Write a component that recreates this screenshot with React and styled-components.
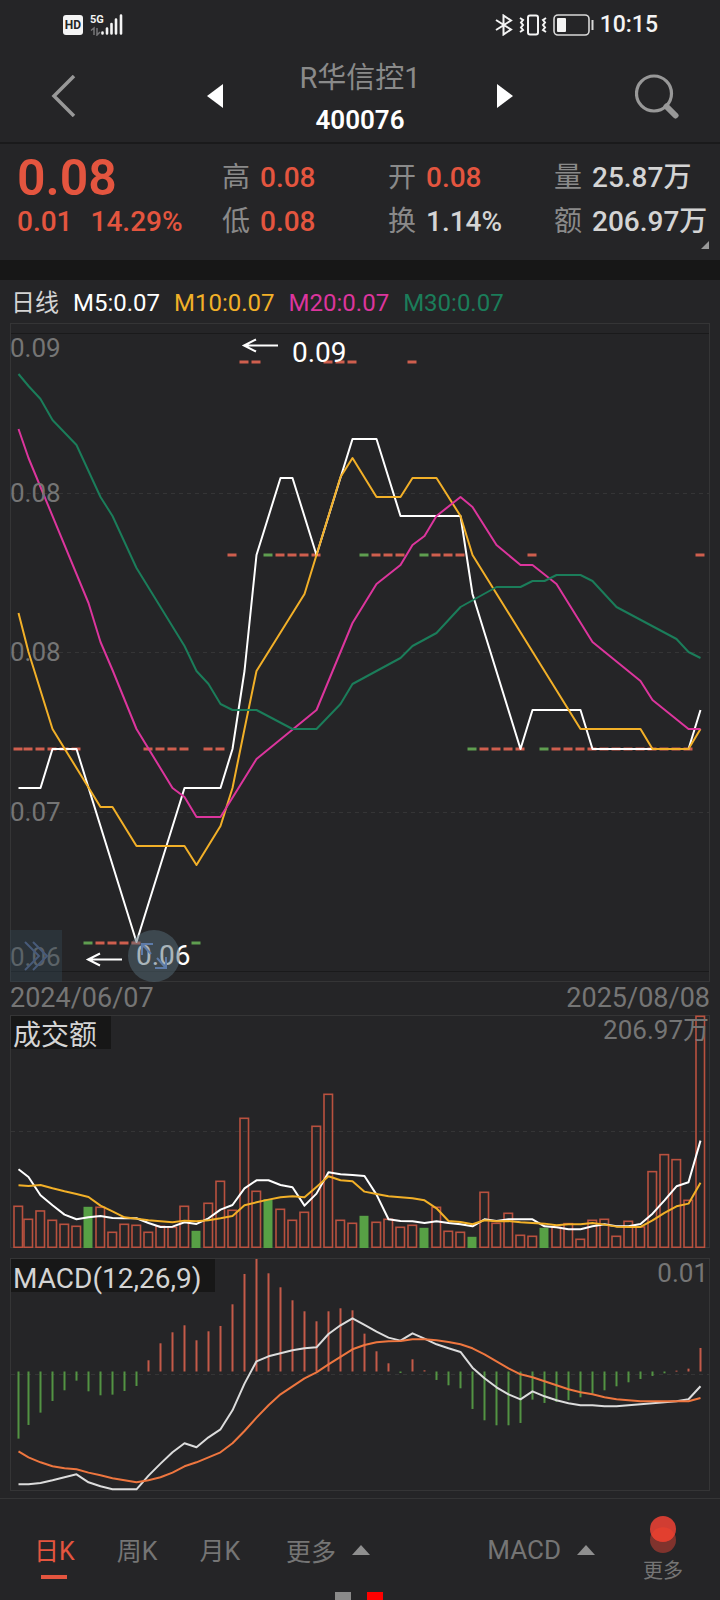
import React from "react";
import styled, { createGlobalStyle } from "styled-components";

const color = {
  bg: "#252527",
  dark: "#171717",
  border: "#353536",
  rise: "#e4553f",
  riseSoft: "#cf5f4e",
  fall: "#57a045",
  fallSoft: "#5f9e50",
  muted: "#8a8a8a",
  axis: "#757575",
  text: "#d4d4d4",
  ma5: "#ffffff",
  ma10: "#f2b028",
  ma20: "#dc359d",
  ma30: "#1b7d5a",
  dea: "#ee763f",
};

const FONT = `Roboto, "Noto Sans CJK SC", sans-serif`;

const GlobalStyle = createGlobalStyle`
  * { box-sizing: border-box; }
  body { margin: 0; background: ${color.bg}; color: ${color.text}; font-family: ${FONT}; }
  button { border: 0; padding: 0; margin: 0; background: none; color: inherit; font: inherit; cursor: pointer; }
  svg { display: block; }
`;

const Page = styled.div`
  min-height: 100vh;
  display: flex;
  flex-direction: column;
`;

const StatusBar = styled.div`
  height: 48px;
  padding: 2px 62px 0 63px;
  display: flex;
  align-items: center;
  justify-content: space-between;
  color: #f4f4f4;
`;

const StatusGroup = styled.div`
  display: flex;
  align-items: center;
  gap: ${(p) => p.$gap}px;
`;

const Clock = styled.time`
  font-size: 23px;
  font-weight: 500;
  line-height: 28px;
`;

const Header = styled.header`
  height: 96px;
  padding: 2px 41px 0;
  border-bottom: 2px solid #1a1a1b;
  display: grid;
  grid-template-columns: 1fr auto 1fr;
  align-items: center;
`;

const IconButton = styled.button`
  display: block;
  justify-self: ${(p) => p.$align || "center"};
`;

const StockNav = styled.div`
  display: flex;
  align-items: center;
  justify-content: space-between;
  width: 306px;
`;

const HeaderSide = styled.div`
  display: grid;
  padding-left: 10px;
`;

const StockTitle = styled.h1`
  margin: 0;
  padding-top: 4px;
  text-align: center;
  font-size: 29px;
  font-weight: 400;
  line-height: 44px;
  color: ${color.muted};
`;

const StockCode = styled.div`
  color: #fff;
  font-size: 26px;
  font-weight: 600;
  line-height: 40px;
  text-align: center;
`;

const Quote = styled.section`
  position: relative;
  height: 116px;
  padding: 12px 0 0 17px;
  display: grid;
  grid-template-columns: 205fr 166fr 166fr 166fr;
  align-items: start;
`;

const QuoteColumn = styled.div`
  display: flex;
  flex-direction: column;
  white-space: nowrap;
`;

const LastPrice = styled.div`
  font-size: 50px;
  font-weight: 600;
  line-height: 44px;
  color: ${color.rise};
`;

const Change = styled.div`
  display: flex;
  gap: 18px;
  font-size: 28px;
  font-weight: 500;
  line-height: 44px;
  color: ${color.rise};
`;

const Stat = styled.div`
  display: flex;
  gap: 10px;
  font-size: 28px;
  line-height: 44px;
`;

const StatName = styled.span`
  color: ${color.muted};
`;

const StatValue = styled.span`
  color: ${(p) => (p.$up ? color.rise : color.text)};
  font-weight: 500;
`;

const Expand = styled.button`
  position: absolute;
  right: 11px;
  bottom: 11px;
`;

const Divider = styled.div`
  height: 20px;
  background: ${color.dark};
`;

const Legend = styled.div`
  height: 43px;
  padding: 2px 11px 0;
  display: flex;
  align-items: center;
  gap: 14px;
  font-size: 24px;
  line-height: 40px;
  white-space: nowrap;
`;

const LegendItem = styled.span`
  color: ${(p) => p.$color};
`;

const Charts = styled.main`
  padding: 0 10px;
  flex: 1;
`;

const Panel = styled.section`
  position: relative;
  margin-bottom: ${(p) => p.$gap || 0}px;
`;

const Plot = styled.svg`
  width: 100%;
  height: auto;
  font-family: ${FONT};
`;

const PanelTitle = styled.h2`
  position: absolute;
  top: 1px;
  left: 1px;
  margin: 0;
  padding: 0 14px 0 2px;
  height: 33px;
  line-height: 40px;
  font-size: 28px;
  font-weight: 400;
  color: ${color.text};
  background: ${color.dark};
`;

const Dates = styled.div`
  height: 33px;
  display: flex;
  justify-content: space-between;
  font-size: 27px;
  line-height: 32px;
  color: ${color.axis};
`;

const PanButton = styled.button`
  position: absolute;
  left: 0;
  bottom: 0;
  width: 52px;
  height: 52px;
  display: grid;
  place-items: center;
  background: rgba(52, 72, 84, 0.4);
`;

const ZoomButton = styled(PanButton)`
  left: 118px;
  border-radius: 50%;
  background: rgba(86, 108, 120, 0.5);
`;

const Footer = styled.footer`
  height: 102px;
  border-top: 1px solid ${color.border};
  padding: 0 37px 0 34px;
  display: grid;
  grid-template-rows: 93px 8px;
`;

const FooterRow = styled.nav`
  display: flex;
  align-items: stretch;
  color: ${color.axis};
  font-size: 25px;
`;

const Tab = styled.button`
  position: relative;
  margin-right: 42px;
  padding-top: 6px;
  white-space: nowrap;
  color: ${(p) => (p.$active ? color.rise : color.axis)};
  &::after {
    content: "";
    display: ${(p) => (p.$active ? "block" : "none")};
    position: absolute;
    left: 7px;
    bottom: 13px;
    width: 26px;
    height: 4px;
    background: ${color.rise};
  }
`;

const MenuButton = styled.button`
  display: flex;
  align-items: center;
  gap: 16px;
  padding-top: 8px;
  margin-left: ${(p) => (p.$end ? "auto" : "4px")};
  font-size: ${(p) => (p.$end ? 26 : 25)}px;
  white-space: nowrap;
`;

const MoreButton = styled.button`
  margin-left: 48px;
  padding-top: 17px;
  display: flex;
  flex-direction: column;
  align-items: center;
  font-size: 20px;
  line-height: 34px;
`;

const Pager = styled.div`
  display: flex;
  justify-content: center;
  gap: 16px;
`;

const PagerMark = styled.span`
  width: 16px;
  height: 8px;
  background: ${(p) => (p.$active ? "#ff0000" : "#8a8a8a")};
`;

/* ---------- data ---------- */

const COUNT = 58;
const FALLING = new Set([6, 15, 21, 29, 34, 38, 44]);
const xAt = (i) => (i === 0 ? 18.5 : 16.5 + 12 * i);

const closeRows = [
  [362, [[19, 20], [26, 28], [33, 33]]],
  [555, [[18, 18], [21, 25], [29, 32], [34, 37], [43, 43], [57, 57]]],
  [749, [[0, 5], [11, 14], [16, 17], [38, 42], [44, 56]]],
  [943, [[6, 10], [15, 15]]],
];

/* Moving averages as [sample index, y] at every turn of the line. */
const averages = [
  [color.ma5, [[0, 788], [2, 788], [3, 749], [5, 749], [10, 942], [14, 788], [17, 788], [18, 749], [19, 671], [20, 555], [22, 478], [23, 478], [25, 555], [28, 439], [30, 439], [32, 516], [37, 516], [38, 594], [42, 749], [43, 710], [47, 710], [48, 749], [56, 749], [57, 710]]],
  [color.ma10, [[0, 613], [1, 652], [3, 729], [7, 807], [8, 807], [10, 846], [14, 846], [15, 865], [17, 826], [18, 788], [19, 729], [20, 671], [24, 594], [25, 555], [27, 477], [28, 458], [30, 497], [32, 497], [33, 478], [35, 478], [37, 516], [38, 555], [47, 729], [52, 729], [53, 749], [56, 749], [57, 729]]],
  [color.ma20, [[0, 429], [1, 458], [6, 603], [7, 642], [8, 670], [10, 729], [13, 788], [14, 797], [15, 817], [17, 817], [20, 759], [25, 710], [28, 623], [30, 584], [32, 565], [33, 545], [34, 536], [35, 516], [37, 497], [38, 507], [40, 545], [42, 565], [43, 565], [45, 584], [48, 642], [52, 681], [53, 700], [56, 729], [57, 729]]],
  [color.ma30, [[0, 374], [1, 386], [2, 399], [3, 420], [5, 445], [7, 497], [8, 516], [10, 568], [12, 607], [14, 646], [15, 671], [16, 684], [17, 704], [18, 710], [20, 710], [23, 729], [25, 729], [27, 704], [28, 684], [30, 671], [32, 658], [33, 646], [35, 633], [37, 607], [40, 587], [42, 587], [43, 581], [44, 581], [45, 575], [47, 575], [48, 581], [50, 607], [55, 639], [56, 652], [57, 658]]],
];

/* The lower panels are sampled in thirds of a unit below the panel origin. */
const turnoverTops = [588, 627, 602, 630, 642, 648, 591, 591, 666, 642, 645, 666, 648, 651, 588, 663, 579, 513, 600, 324, 543, 568, 597, 630, 606, 348, 252, 630, 639, 618, 636, 627, 651, 645, 654, 591, 663, 666, 681, 546, 639, 609, 675, 678, 654, 651, 640, 687, 630, 627, 678, 633, 650, 484, 433, 448, 570, 18];
const turnover5 = [477, 500, 555, 585, 613, 627, 621, 617, 623, 624, 624, 638, 650, 649, 636, 641, 624, 598, 584, 534, 510, 510, 524, 531, 586, 550, 486, 492, 494, 497, 553, 627, 632, 633, 638, 633, 638, 642, 648, 627, 632, 627, 627, 627, 648, 651, 657, 657, 648, 642, 648, 648, 641, 610, 570, 528, 516, 391];
const turnover10 = [525, 527, 524, 534, 543, 551, 560, 586, 603, 621, 625, 630, 633, 636, 631, 633, 630, 624, 617, 585, 576, 568, 561, 558, 561, 530, 498, 510, 513, 544, 551, 558, 561, 564, 570, 594, 632, 635, 642, 630, 633, 632, 636, 638, 640, 645, 642, 642, 638, 643, 649, 650, 650, 630, 608, 588, 580, 517];
const macdEnds = [565, 524, 487, 452, 420, 391, 423, 435, 433, 422, 407, 330, 279, 246, 225, 270, 243, 227, 162, 71, 26, 69, 111, 150, 183, 213, 183, 174, 180, 250, 303, 339, 368, 327, 360, 389, 405, 414, 476, 510, 525, 525, 518, 448, 458, 455, 450, 441, 430, 420, 408, 396, 386, 377, 369, 361, 355, 293];
const dif = [702, 702, 698, 690, 681, 672, 696, 708, 717, 717, 717, 676, 640, 606, 579, 591, 561, 537, 480, 400, 333, 318, 309, 300, 294, 291, 251, 225, 204, 224, 244, 262, 271, 249, 265, 282, 294, 305, 352, 384, 411, 432, 447, 423, 438, 450, 459, 465, 465, 468, 468, 465, 462, 459, 456, 453, 447, 408];
const dea = [603, 621, 636, 648, 654, 657, 667, 675, 684, 690, 696, 690, 681, 667, 648, 636, 621, 606, 579, 542, 502, 465, 432, 408, 384, 366, 342, 320, 297, 284, 276, 273, 272, 267, 267, 270, 275, 282, 294, 312, 333, 354, 372, 381, 393, 405, 417, 426, 432, 441, 447, 450, 453, 453, 453, 453, 453, 443];

const TURNOVER_ORIGIN = 1010;
const MACD_ORIGIN = 1250;
const scaled = (origin, v) => origin + v / 3 + 0.3;

const Line = ({ points, stroke }) => (
  <polyline
    points={points.map(([i, y]) => `${xAt(i)},${y}`).join(" ")}
    fill="none"
    stroke={stroke}
    strokeWidth="2"
    strokeLinejoin="round"
  />
);

const series = (values, origin) => values.map((v, i) => [i, scaled(origin, v)]);

const GridLine = ({ y }) => (
  <line x1="11" x2="709" y1={y} y2={y} stroke="#353536" strokeDasharray="4 4" />
);

const Frame = ({ y, height }) => (
  <rect x="10.5" y={y + 0.5} width="699" height={height - 1} fill="none" stroke={color.border} />
);

const AxisText = ({ x, y, end, children }) => (
  <text x={x} y={y} fontSize="26" fill={color.axis} textAnchor={end ? "end" : "start"}>
    {children}
  </text>
);

const Marker = ({ x, y, textX, textY, children }) => (
  <g>
    <path
      d={`M${x + 35} ${y}H${x + 1}M${x + 13} ${y - 6}L${x + 1} ${y}l12 6`}
      fill="none"
      stroke="#fff"
      strokeWidth="2"
    />
    <text x={textX} y={textY} fontSize="28" fill="#fff">
      {children}
    </text>
  </g>
);

function PriceChart() {
  const candles = closeRows.flatMap(([y, runs]) =>
    runs.flatMap(([from, to]) =>
      Array.from({ length: to - from + 1 }, (_, k) => ({ i: from + k, y }))
    )
  );
  return (
    <Panel>
      <Plot viewBox="10 323 700 659" role="img" aria-label="日线">
        <Frame y={323} height={659} />
        <path d="M11 333.5H709M11 971.5H709" stroke="#1a1a1b" />
        {[493, 652, 812].map((y) => (
          <GridLine key={y} y={y + 0.5} />
        ))}
        {candles.map(({ i, y }) => (
          <rect
            key={i}
            x={xAt(i) - 5}
            y={y - 1.5}
            width="9"
            height="3"
            fill={FALLING.has(i) ? color.fallSoft : color.riseSoft}
          />
        ))}
        {averages.map(([stroke, points]) => (
          <Line key={stroke} stroke={stroke} points={points} />
        ))}
        <AxisText x={10} y={357}>0.09</AxisText>
        <AxisText x={10} y={502}>0.08</AxisText>
        <AxisText x={10} y={661}>0.08</AxisText>
        <AxisText x={10} y={821}>0.07</AxisText>
        <AxisText x={10} y={966}>0.06</AxisText>
        <Marker x={243} y={345.5} textX={292} textY={362}>0.09</Marker>
        <Marker x={87} y={959.5} textX={136} textY={965}>0.06</Marker>
      </Plot>
      <PanButton aria-label="向右平移">
        <svg width="26" height="32" viewBox="0 0 26 32" fill="none" stroke="#485b7a" strokeWidth="2">
          <path d="M2 2l14 14L2 30M10 2l14 14L10 30" />
        </svg>
      </PanButton>
      <ZoomButton aria-label="放大">
        <svg width="28" height="28" viewBox="0 0 28 28" fill="none" stroke="#5d7ba8" strokeWidth="2">
          <path d="M2 13V2h11M2 2l9 10M26 15v11H15M26 26l-9-10" />
        </svg>
      </ZoomButton>
    </Panel>
  );
}

function TurnoverChart() {
  return (
    <Panel $gap={10}>
      <Plot viewBox="10 1015 700 233" role="img" aria-label="成交额">
        <Frame y={1015} height={233} />
        <GridLine y={1131.5} />
        {turnoverTops.map((v, i) => {
          const top = scaled(TURNOVER_ORIGIN, v);
          return FALLING.has(i) ? (
            <rect key={i} x={xAt(i) - 5} y={top - 0.5} width="9" height={1248.5 - top} fill={color.fall} />
          ) : (
            <rect
              key={i}
              x={xAt(i) - 4.5}
              y={top}
              width="8.5"
              height={1247.3 - top}
              fill="none"
              stroke="#b9513f"
              strokeWidth="1.6"
            />
          );
        })}
        <AxisText x={709} y={1039} end>206.97万</AxisText>
        <Line stroke={color.ma5} points={series(turnover5, TURNOVER_ORIGIN)} />
        <Line stroke={color.ma10} points={series(turnover10, TURNOVER_ORIGIN)} />
      </Plot>
      <PanelTitle>成交额</PanelTitle>
    </Panel>
  );
}

function MacdChart() {
  const zero = 1371.5;
  return (
    <Panel>
      <Plot viewBox="10 1258 700 233" role="img" aria-label="MACD">
        <Frame y={1258} height={233} />
        <GridLine y={1374.5} />
        {Array.from({ length: COUNT }, (_, i) => {
          const end = scaled(MACD_ORIGIN, macdEnds[i]);
          return (
            <rect
              key={i}
              x={xAt(i) - 1}
              y={Math.min(zero, end)}
              width="2"
              height={Math.max(1, Math.abs(end - zero))}
              fill={end > zero ? "#539343" : "#c45a49"}
            />
          );
        })}
        <AxisText x={708} y={1282} end>0.01</AxisText>
        <Line stroke="#dcdcdc" points={series(dif, MACD_ORIGIN)} />
        <Line stroke={color.dea} points={series(dea, MACD_ORIGIN)} />
      </Plot>
      <PanelTitle>MACD(12,26,9)</PanelTitle>
    </Panel>
  );
}

const HdBadge = () => (
  <svg width="20" height="20" viewBox="0 0 20 20" role="img" aria-label="HD">
    <rect width="20" height="20" rx="3" fill="#f4f4f4" />
    <text x="10" y="14" textAnchor="middle" fontSize="12" fontWeight="700" fill={color.bg} fontFamily="Roboto, sans-serif">HD</text>
  </svg>
);

const Signal = () => (
  <svg width="33" height="22" viewBox="0 0 33 22" role="img" aria-label="5G">
    <text x="0" y="9" fontSize="11" fontWeight="700" fill="#f4f4f4" fontFamily="Roboto, sans-serif">5G</text>
    <path d="M1 16.500l3-2.500v7M7 14v7l3-3" fill="none" stroke="#77777a" strokeWidth="1.500" />
    <path d="M12.500 18.500v1M17 14.500v5M21.500 10v9.500M26 5.500v14M31 1.500v18" fill="none" stroke="#f4f4f4" strokeWidth="2.600" strokeLinecap="round" />
  </svg>
);

const Bluetooth = () => (
  <svg width="18" height="22" viewBox="0 0 18 22" fill="none" stroke="#f4f4f4" strokeWidth="2" aria-hidden="true">
    <path d="M1 6l15 9.500L8.500 20.500V1.500L16 6.500 1 16" />
  </svg>
);

const Vibrate = () => (
  <svg width="28" height="22" viewBox="0 0 28 22" fill="none" stroke="#f4f4f4" strokeWidth="2" aria-hidden="true">
    <rect x="9" y="1.500" width="10" height="19" rx="2" />
    <path d="M1 4l3 2-2 2.500 2 2.500-2 2.500 2 2.500-3 2M27 4l-3 2 2 2.500-2 2.500 2 2.500-2 2.500 3 2" strokeWidth="2" />
  </svg>
);

const Battery = () => (
  <svg width="41" height="22" viewBox="0 0 41 22" aria-hidden="true">
    <rect x="1" y="1" width="35" height="20" rx="4" fill="none" stroke="#d8d8d8" strokeWidth="1.600" />
    <rect x="4" y="4" width="9" height="14" rx="1" fill="#f4f4f4" />
    <path d="M39.500 6v10" stroke="#d8d8d8" strokeWidth="2" />
  </svg>
);

const UpArrow = () => (
  <svg width="18" height="10" viewBox="0 0 18 10" aria-hidden="true">
    <path d="M0 10L9 0l9 10z" fill="#8f8f8f" />
  </svg>
);

const stats = [
  [["高", "0.08", true], ["低", "0.08", true]],
  [["开", "0.08", true], ["换", "1.14%", false]],
  [["量", "25.87万", false], ["额", "206.97万", false]],
];

export default function App() {
  return (
    <Page>
      <GlobalStyle />
      <StatusBar>
        <StatusGroup $gap={7}>
          <HdBadge />
          <Signal />
        </StatusGroup>
        <StatusGroup $gap={6}>
          <Bluetooth />
          <Vibrate />
          <Battery />
          <Clock>10:15</Clock>
        </StatusGroup>
      </StatusBar>

      <Header>
        <HeaderSide>
          <IconButton $align="start" aria-label="返回">
            <svg width="25" height="42" viewBox="0 0 25 42" fill="none" stroke="#989898" strokeWidth="3.500">
              <path d="M23 1L3 21l20 20" />
            </svg>
          </IconButton>
        </HeaderSide>
        <StockNav>
          <IconButton aria-label="上一只">
            <svg width="16" height="24" viewBox="0 0 16 24">
              <path d="M16 0v24L0 12z" fill="#fff" />
            </svg>
          </IconButton>
          <div>
            <StockTitle>R华信控1</StockTitle>
            <StockCode>400076</StockCode>
          </div>
          <IconButton aria-label="下一只">
            <svg width="16" height="24" viewBox="0 0 16 24">
              <path d="M0 0l16 12L0 24z" fill="#fff" />
            </svg>
          </IconButton>
        </StockNav>
        <HeaderSide>
          <IconButton $align="end" aria-label="搜索">
            <svg width="44" height="45" viewBox="0 0 44 45" fill="none" stroke="#989898">
              <circle cx="19" cy="19.500" r="17.500" strokeWidth="3.200" />
              <path d="M31.500 32.500l9 9" strokeWidth="6" strokeLinecap="round" />
            </svg>
          </IconButton>
        </HeaderSide>
      </Header>

      <Quote>
        <QuoteColumn>
          <LastPrice>0.08</LastPrice>
          <Change>
            <span>0.01</span>
            <span>14.29%</span>
          </Change>
        </QuoteColumn>
        {stats.map((column) => (
          <QuoteColumn key={column[0][0]}>
            {column.map(([name, value, up]) => (
              <Stat key={name}>
                <StatName>{name}</StatName>
                <StatValue $up={up}>{value}</StatValue>
              </Stat>
            ))}
          </QuoteColumn>
        ))}
        <Expand aria-label="展开">
          <svg width="8" height="8" viewBox="0 0 8 8">
            <path d="M8 0v8H0z" fill="#999" />
          </svg>
        </Expand>
      </Quote>
      <Divider />

      <Legend>
        <LegendItem $color={color.text}>日线</LegendItem>
        <LegendItem $color={color.ma5}>M5:0.07</LegendItem>
        <LegendItem $color={color.ma10}>M10:0.07</LegendItem>
        <LegendItem $color={color.ma20}>M20:0.07</LegendItem>
        <LegendItem $color={color.ma30}>M30:0.07</LegendItem>
      </Legend>

      <Charts>
        <PriceChart />
        <Dates>
          <span>2024/06/07</span>
          <span>2025/08/08</span>
        </Dates>
        <TurnoverChart />
        <MacdChart />
      </Charts>

      <Footer>
        <FooterRow>
          <Tab $active>日K</Tab>
          <Tab>周K</Tab>
          <Tab>月K</Tab>
          <MenuButton aria-haspopup="menu">
            更多
            <UpArrow />
          </MenuButton>
          <MenuButton $end aria-haspopup="menu">
            MACD
            <UpArrow />
          </MenuButton>
          <MoreButton>
            <svg width="26" height="38" viewBox="0 0 26 38" aria-hidden="true">
              <circle cx="13" cy="24" r="13" fill="#80332d" />
              <circle cx="13" cy="13" r="13" fill="#d13d32" />
              <path d="M1.300 18.500a13 13 0 0 1 23.400 0a13 13 0 0 1-23.400 0z" fill="#e23f2f" />
            </svg>
            更多
          </MoreButton>
        </FooterRow>
        <Pager>
          <PagerMark />
          <PagerMark $active />
        </Pager>
      </Footer>
    </Page>
  );
}
